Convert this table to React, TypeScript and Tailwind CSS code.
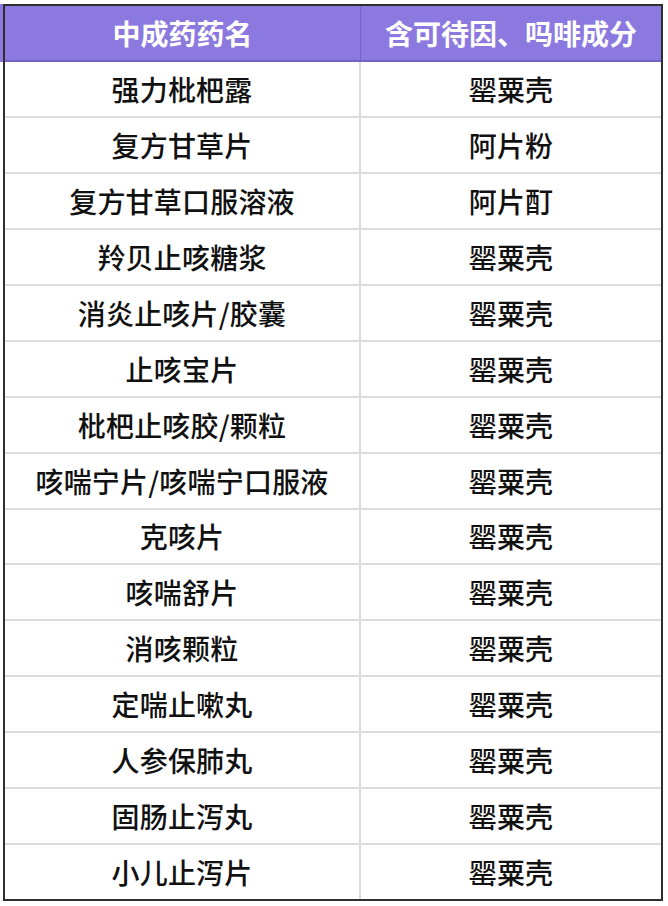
const rows: [string, string][] = [
  ['强力枇杷露', '罂粟壳'],
  ['复方甘草片', '阿片粉'],
  ['复方甘草口服溶液', '阿片酊'],
  ['羚贝止咳糖浆', '罂粟壳'],
  ['消炎止咳片/胶囊', '罂粟壳'],
  ['止咳宝片', '罂粟壳'],
  ['枇杷止咳胶/颗粒', '罂粟壳'],
  ['咳喘宁片/咳喘宁口服液', '罂粟壳'],
  ['克咳片', '罂粟壳'],
  ['咳喘舒片', '罂粟壳'],
  ['消咳颗粒', '罂粟壳'],
  ['定喘止嗽丸', '罂粟壳'],
  ['人参保肺丸', '罂粟壳'],
  ['固肠止泻丸', '罂粟壳'],
  ['小儿止泻片', '罂粟壳'],
];

export default function App() {
  return (
    <div
      className="w-[668px] h-[906px] bg-white overflow-hidden flex pt-[4px] text-[#111]"
      style={{ fontFamily: '"Noto Sans CJK SC", "Noto Sans", sans-serif' }}
    >
      <div className="w-[3px] shrink-0">
        <div className="h-[58px] bg-[#8b79df]" />
      </div>
      <div className="w-[660px] h-[897px] border-2 border-[#2f2f2f] flex flex-col">
        <div className="grid grid-cols-[356px_1fr] h-[56px] bg-[#8b79df] border-b-2 border-[#7263c4] text-white font-bold text-[28px]">
          <div className="flex items-center justify-center border-r border-[#7263c4]">中成药药名</div>
          <div className="flex items-center justify-center">含可待因、吗啡成分</div>
        </div>
        {rows.map(([name, part], i) => (
          <div
            key={i}
            className={`grid grid-cols-[356px_1fr] flex-1 text-[28px] font-medium tracking-[0.2px] ${i < rows.length - 1 ? 'border-b-2 border-[#dcdcdc]' : ''}`}
          >
            <div className="flex items-center justify-center border-r-2 border-[#dcdcdc]">{name}</div>
            <div className="flex items-center justify-center">{part}</div>
          </div>
        ))}
      </div>
    </div>
  );
}
